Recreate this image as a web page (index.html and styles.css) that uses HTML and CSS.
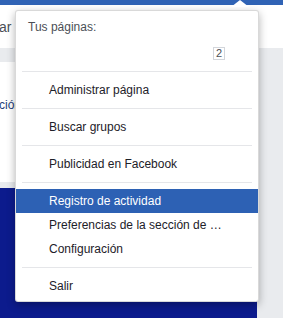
FILE: index.html
```html
<!DOCTYPE html>
<html lang="es">
<head>
    <meta charset="UTF-8">
    <meta name="viewport" content="width=device-width, initial-scale=1.0">
    <title>Menú de cuenta</title>
    <link rel="stylesheet" href="styles.css">
</head>
<body>
    <div class="topbar"></div>
    <div class="subbar">
        <div class="search">ar …</div>
    </div>

    <div class="main">
        <div class="left-col">
            <div class="strip"></div>
            <div class="card">
                <div class="card-link">ción</div>
            </div>
            <div class="gap"></div>
            <div class="banner"></div>
        </div>
        <div class="right-col"></div>
    </div>

    <div class="dropdown">
        <span class="caret"></span>
        <div class="menu-header">Tus páginas:</div>
        <div class="page-row">
            <span class="page-name"></span>
            <span class="badge">2</span>
        </div>
        <div class="sep"></div>
        <div class="item">Administrar página</div>
        <div class="sep"></div>
        <div class="item">Buscar grupos</div>
        <div class="sep"></div>
        <div class="item">Publicidad en Facebook</div>
        <div class="sep"></div>
        <div class="item active">Registro de actividad</div>
        <div class="item">Preferencias de la sección de noticias</div>
        <div class="item">Configuración</div>
        <div class="sep"></div>
        <div class="item">Salir</div>
    </div>
</body>
</html>
```

FILE: styles.css
```css
body {
    margin: 0;
    font-family: 'Liberation Sans', Arial, sans-serif;
    font-size: 12px;
    color: #1d2129;
    background-color: #e9ebee;
    height: 318px;
    overflow: hidden;
}
.topbar {
    height: 5px;
    background-color: #3063b5;
}
.subbar {
    height: 43px;
    background-color: #fff;
    overflow: hidden;
}
.search {
    padding-top: 14px;
    margin-left: -1px;
    font-size: 14px;
    line-height: 16px;
    color: #4b4f56;
    white-space: nowrap;
}
.main {
    display: grid;
    grid-template-columns: 257px 1fr;
    height: 270px;
}
.left-col {
    display: flex;
    flex-direction: column;
}
.strip {
    height: 14px;
    background-color: #e9ebee;
}
.card {
    height: 120px;
    background-color: #fff;
}
.card-link {
    padding-top: 36px;
    margin-left: -1px;
    line-height: 14px;
    color: #24407a;
}
.gap {
    height: 6px;
    background-color: #e9ebee;
}
.banner {
    flex: 1;
    background-color: #0c1b8d;
}
.right-col {
    background-color: #e9ebee;
}
.dropdown {
    position: absolute;
    top: 10px;
    left: 15px;
    width: 242px;
    padding: 5px 0 3px;
    background-color: #fff;
    border: 1px solid rgba(0, 0, 0, 0.15);
    border-radius: 3px;
    box-shadow: 0 3px 8px rgba(0, 0, 0, 0.3);
}
.caret {
    position: absolute;
    top: -11px;
    left: 215px;
    width: 0;
    height: 0;
    border-left: 9px solid transparent;
    border-right: 9px solid transparent;
    border-bottom: 7px solid #fff;
}
.menu-header {
    height: 22px;
    line-height: 22px;
    padding-left: 12px;
    color: #4b4f56;
}
.page-row {
    display: flex;
    align-items: center;
    justify-content: space-between;
    height: 24px;
    margin-top: 3px;
    padding: 0 33px 0 33px;
}
.badge {
    display: inline-block;
    box-sizing: border-box;
    width: 12px;
    height: 13px;
    border: 1px solid #d3d6db;
    font-size: 11px;
    line-height: 11px;
    text-align: center;
    color: #4b4f56;
}
.sep {
    height: 1px;
    margin: 6px 6px;
    background-color: #e5e6e9;
}
.item {
    height: 24px;
    line-height: 24px;
    padding: 0 34px 0 33px;
    white-space: nowrap;
    overflow: hidden;
    text-overflow: ellipsis;
}
.item.active {
    background-color: #2d61b4;
    color: #fff;
}
```
